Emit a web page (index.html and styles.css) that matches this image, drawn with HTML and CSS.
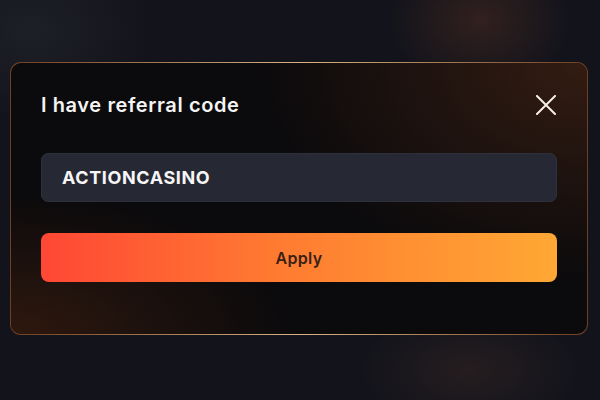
FILE: index.html
```html
<!DOCTYPE html>
<html lang="en">
<head>
  <meta charset="UTF-8">
  <meta name="viewport" content="width=device-width, initial-scale=1.0">
  <title>Referral code</title>
  <link rel="stylesheet" href="styles.css">
</head>
<body>

  <div class="overlay">
    <!-- Referral code dialog -->
    <div class="dialog">
      <div class="dialog-header">
        <h2>I have referral code</h2>
        <button class="close" type="button" aria-label="Close">
          <svg width="20" height="20" viewBox="0 0 20 20">
            <path d="M1 1 L19 19 M19 1 L1 19" stroke="#f6eee4" stroke-width="2" stroke-linecap="square" fill="none"/>
          </svg>
        </button>
      </div>
      <form class="referral-form" onsubmit="event.preventDefault()">
        <input type="text" class="code-input" value="ACTIONCASINO">
        <button type="submit" class="apply">Apply</button>
      </form>
    </div>
  </div>

</body>
</html>
```

FILE: styles.css
```css
/* Global Styles */
body {
  font-family: Inter, "Noto Sans", sans-serif;
  margin: 0;
  padding: 0;
  color: #fff;
}

.overlay {
  width: 600px;
  height: 400px;
  box-sizing: border-box;
  padding: 62px 12px 0 10px;
  background:
    radial-gradient(ellipse 90px 70px at 480px 20px, rgba(70, 40, 32, 0.6), transparent),
    radial-gradient(ellipse 110px 60px at 470px 370px, rgba(55, 38, 36, 0.5), transparent),
    radial-gradient(ellipse 120px 90px at 30px 30px, rgba(40, 42, 52, 0.5), transparent),
    #13141b;
}

/* Dialog */
.dialog {
  border: 1px solid transparent;
  border-radius: 11px;
  padding: 28px 30px 52px;
  background:
    radial-gradient(ellipse 330px 220px at 100% 0%, #331c12, transparent) padding-box,
    radial-gradient(ellipse 280px 140px at 0% 100%, #2e180e, transparent) padding-box,
    linear-gradient(#0b0a0c, #0b0a0c) padding-box,
    linear-gradient(to right, #6e3f22, #d9b486 50%, #6e3f22) border-box;
}

.dialog-header {
  display: flex;
  align-items: center;
  justify-content: space-between;
  height: 28px;
}

h2 {
  margin: 0;
  font-size: 20px;
  font-weight: 600;
  color: #f4f4f4;
  letter-spacing: 0.6px;
}

.close {
  width: 20px;
  height: 20px;
  margin-right: 1px;
  padding: 0;
  border: none;
  background: none;
  cursor: pointer;
}

.close svg {
  display: block;
}

.referral-form {
  display: flex;
  flex-direction: column;
  gap: 31px;
  margin-top: 34px;
}

.code-input {
  height: 49px;
  box-sizing: border-box;
  padding: 0 20px;
  border: 1px solid #2e313c;
  border-radius: 7px;
  background-color: #262833;
  color: #f6f6f6;
  font-family: inherit;
  font-size: 18px;
  font-weight: 700;
  letter-spacing: 0.6px;
  outline: none;
}

.apply {
  height: 49px;
  border: none;
  border-radius: 8px;
  background: linear-gradient(to right, #ff4735, #ff7a31 45%, #ffa834);
  color: #3a1f14;
  font-family: inherit;
  font-size: 16px;
  font-weight: 600;
  letter-spacing: 0.3px;
  cursor: pointer;
}
```
